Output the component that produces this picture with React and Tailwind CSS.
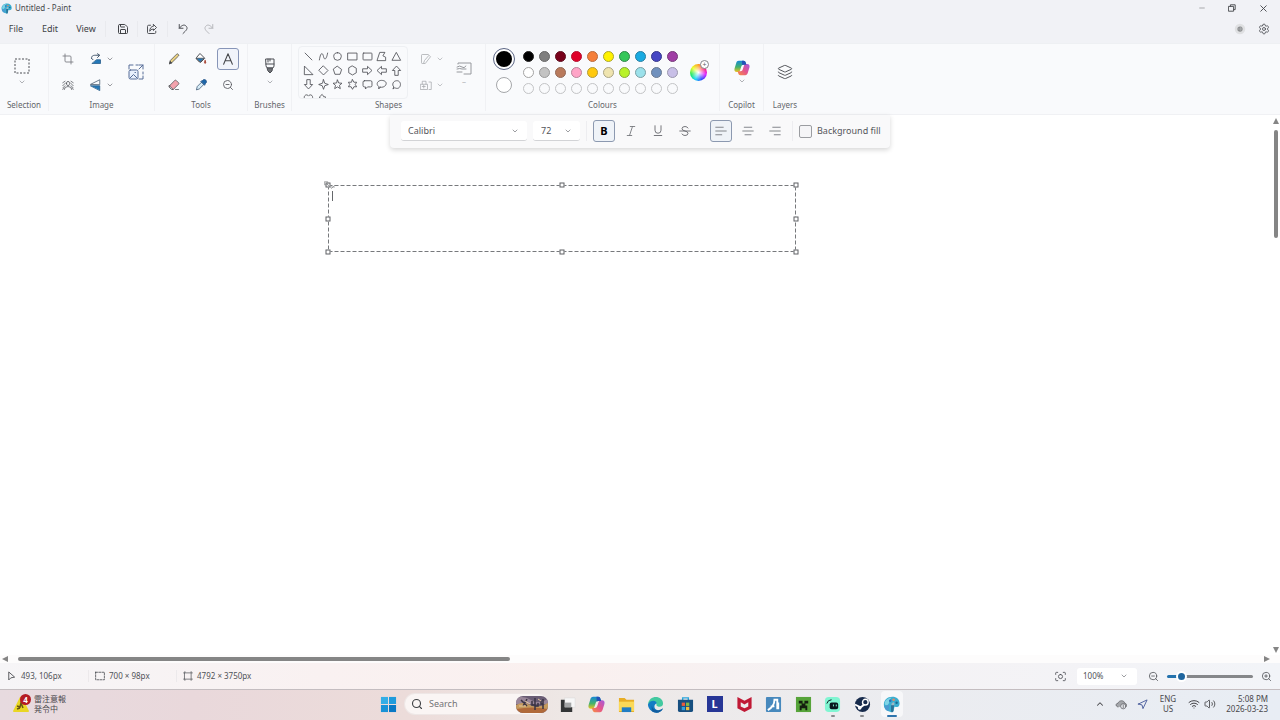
import React from "react";
import { ChevronDown, ChevronUp, Save, Crop, Settings, Minus, X, Search, ZoomOut, ZoomIn, Wifi, Volume2, Navigation, Layers } from "lucide-react";

const Svg = ({ size = "size-[14px]", children, box = "0 0 16 16", stroke = "#4b4d52" }) => (
  <svg viewBox={box} className={`${size} shrink-0`} fill="none" stroke={stroke} strokeWidth="1" strokeLinecap="round" strokeLinejoin="round" aria-hidden="true">
    {children}
  </svg>
);

const Chevron = ({ className = "text-[#6b6d72]" }) => <ChevronDown className={`size-2 shrink-0 ${className}`} strokeWidth={2} aria-hidden="true" />;

const IconButton = ({ label, className = "", children }) => (
  <button type="button" aria-label={label} className={`flex shrink-0 items-center justify-center rounded-[3px] ${className}`}>
    {children}
  </button>
);

const PaintLogo = ({ size }) => (
  <Svg size={size} stroke="none" box="0 0 20 20">
    <path d="M11 1c5 0 8.500 3 8.500 8 0 3-2 4-4 4l-2-.5-1 5q-1 2-3 1.500l-5-2Q1 15 1 10C1 5 5 1 11 1z" fill="#3aaed0" />
    <path d="M2 9c0-4 4-7 8-7-3 2-2 6-4 8-1 1-3 2-4-1z" fill="#7fd4e6" />
    <path d="M1.500 12l6-2-1 8-2-1q-2.500-2-3-5z" fill="#4a9ad0" />
    <circle cx="8.500" cy="5.500" r="1.500" fill="#2f6fb7" />
    <circle cx="12.500" cy="4.500" r="1.500" fill="#e08a66" />
    <circle cx="16" cy="8" r="1.400" fill="#196a91" />
    <path d="M10 9l2-2 1.500 1.500-.5 3h-3z" fill="#9fb9c4" />
    <path d="M9.500 11h3.500l-.8 7q-1.500 2-2.700 0z" fill="#2c7196" />
  </Svg>
);

const CopilotLogo = ({ size }) => (
  <Svg size={size} stroke="none" box="0 0 20 20">
    <defs>
      <linearGradient id="cpA" x1="0" y1="0" x2="0" y2="1">
        <stop offset="0" stopColor="#1789d6" /><stop offset=".55" stopColor="#43b26d" /><stop offset="1" stopColor="#f0c31f" />
      </linearGradient>
      <linearGradient id="cpB" x1="1" y1="0" x2="0" y2="1">
        <stop offset="0" stopColor="#a35be0" /><stop offset=".5" stopColor="#e5548c" /><stop offset="1" stopColor="#f79140" />
      </linearGradient>
    </defs>
    <path d="M6 1h6c1.500 0 2.300 1 2.700 2.500L15.500 6H12c-2 0-2.500 1-3 2.500L7.500 13c-.5 1.500-1.500 2-3 2H3.500C1 15 0 13 .7 10.500L2.700 4C3.300 2 4.200 1 6 1z" fill="url(#cpA)" />
    <path d="M14 19H8c-1.500 0-2.300-1-2.700-2.500L4.500 14H8c2 0 2.500-1 3-2.500L12.500 7c.5-1.500 1.500-2 3-2h1c2.500 0 3.500 2 2.800 4.500L17.300 16c-.6 2-1.500 3-3.300 3z" fill="url(#cpB)" />
    <path d="M10 1h2c1.500 0 2.300 1 2.700 2.500L15.500 6H12c-.8 0-1.400.2-1.800.6z" fill="#2452b8" />
  </Svg>
);

const Group = ({ label, className, children }) => (
  <section aria-label={label} className={`flex shrink-0 flex-col border-r border-[#f0f1f4] pt-0.5 ${className}`}>
    <div className="flex h-[52px]">{children}</div>
    <div className="text-center text-[8px] leading-[13px] text-[#64666b]">{label}</div>
  </section>
);

const shapes = [
  ["Line", "M3 3l10 10"],
  ["Curve", "M2 13C4 0 7 3 8 8s4 6 6-5"],
  ["Oval", "M8 2.500a5.500 5.500 0 100 11 5.500 5.500 0 000-11z"],
  ["Rectangle", "M1.500 3h13v10h-13z"],
  ["Rounded rectangle", "M2.500 3h11q1 0 1 1v8q0 1-1 1h-11q-1 0-1-1V4q0-1 1-1z"],
  ["Polygon", "M6 2h7l-3 5 4 2v5H2z"],
  ["Triangle", "M8 2.500l6 11H2z"],
  ["Right triangle", "M2.500 2l12 12h-12z"],
  ["Diamond", "M8 1.500L14.500 8 8 14.500 1.500 8z"],
  ["Pentagon", "M8 2l6 4.500-2.300 7H4.300L2 6.500z"],
  ["Hexagon", "M8 1.500l5.500 3.200v6.600L8 14.500l-5.500-3.200V4.700z"],
  ["Right arrow", "M1.500 5.500H8V2l6.500 6L8 14v-3.500H1.500z"],
  ["Left arrow", "M14.500 5.500H8V2L1.500 8 8 14v-3.500h6.500z"],
  ["Up arrow", "M5.500 14.500V8H2l6-6.500L14 8h-3.500v6.500z"],
  ["Down arrow", "M5.500 1.500V8H2l6 6.500L14 8h-3.500V1.500z"],
  ["Four-point star", "M8 1l1.800 5.200L15 8 9.800 9.800 8 15 6.200 9.800 1 8l5.200-1.800z"],
  ["Five-point star", "M8 1.500l1.800 4.300 4.700.4-3.600 3 1.200 4.800L8 11.500 3.900 14l1.200-4.800-3.600-3 4.700-.4z"],
  ["Six-point star", "M8 1l2 3.700h4L12 8l2 3.300h-4L8 15l-2-3.700H2L4 8 2 4.700h4z"],
  ["Rounded callout", "M3.500 2.500h9q2 0 2 2v5q0 2-2 2H8l-3 3v-3H3.500q-2 0-2-2v-5q0-2 2-2z"],
  ["Oval callout", "M6 12l-2 2.500V11C-1 7 3 2 8 2s8.500 3 6 7c-1.500 2.500-5 3.500-8 3z"],
  ["Cloud callout", "M3 14l1-2.500C1 8 3 3 8 2.500s7 5 5 8.500-5 3-7 2z"],
  ["Heart", "M8 14L2.500 8C0 5 5 0 8 4.500 11 0 16 5 13.500 8z"],
  ["Lightning", "M2 6l4-4 3 4 1-1 4 9-6-4z"],
];

const swatches = [
  ["Black", "bg-[#000000] border-[#222222]"], ["Grey", "bg-[#7f7f7f] border-[#686868]"], ["Dark red", "bg-[#78001a] border-[#5f1020]"],
  ["Red", "bg-[#df0029] border-[#b51230]"], ["Orange", "bg-[#f57f3b] border-[#ba6a3d]"], ["Yellow", "bg-[#fff200] border-[#aca52c]"],
  ["Green", "bg-[#35c759] border-[#318849]"], ["Turquoise", "bg-[#19abe2] border-[#287fa2]"], ["Indigo", "bg-[#4546c4] border-[#37388b]"], ["Purple", "bg-[#a03da5] border-[#753979]"],
  ["White", "bg-white border-[#a3a3a3]"], ["Light grey", "bg-[#c3c3c3] border-[#999999]"], ["Brown", "bg-[#b97a5c] border-[#936957]"],
  ["Rose", "bg-[#ffa4c7] border-[#b98298]"], ["Gold", "bg-[#ffc90e] border-[#b29a3b]"], ["Light yellow", "bg-[#efe4af] border-[#aaa484]"],
  ["Lime", "bg-[#b8f229] border-[#87a93b]"], ["Light turquoise", "bg-[#9be1eb] border-[#789fa4]"], ["Blue grey", "bg-[#7091be] border-[#687890]"], ["Lavender", "bg-[#c8bfe7] border-[#9a96ad]"],
];

const TitleBar = () => (
  <header className="bg-[#f1f2f6]">
    <div className="flex h-4 items-center justify-between pr-[9px] pl-px">
      <div className="flex items-center gap-[3px] text-[8px] leading-4 text-[#47494d]">
        <PaintLogo size="size-[11px]" />
        <h1>Untitled - Paint</h1>
      </div>
      <div className="flex items-center text-[#45474b]">
        <IconButton label="Minimise" className="h-3 w-[30px]"><Minus className="size-2 text-[#a8a9ac]" strokeWidth={3} /></IconButton>
        <IconButton label="Restore" className="h-3 w-[30px]">
          <Svg size="size-2" box="0 0 10 10"><path d="M1 3h6v6H1zM3 3V1h6v6H7" strokeWidth="1.200" /></Svg>
        </IconButton>
        <IconButton label="Close" className="ml-2 h-3 w-4"><X className="size-[11px]" strokeWidth={2} /></IconButton>
      </div>
    </div>
    <div className="flex h-[27px] items-center justify-between pr-2 pb-0.5 pl-2">
      <nav aria-label="Menu" className="flex items-center text-[9px] text-[#404246]">
        <button type="button" className="w-4 text-center">File</button>
        <button type="button" className="ml-4 w-5 text-center">Edit</button>
        <button type="button" className="ml-4 w-5 text-center">View</button>
        <div className="mx-[9px] h-4 border-l border-[#e9eaee]" />
        <IconButton label="Save" className="size-4"><Save className="size-3" strokeWidth={2} /></IconButton>
        <div className="mx-1.5 h-4 border-l border-[#e9eaee]" />
        <IconButton label="Share" className="size-4">
          <Svg size="size-3"><path d="M6 3H3.500Q2 3 2 4.500v8Q2 14 3.500 14h8q1.500 0 1.500-1.500V11M10 2l4 4-4 4V8Q6 8 5 11q0-6 5-7z" strokeWidth="1.300" /></Svg>
        </IconButton>
        <div className="mx-[7px] h-4 border-l border-[#e9eaee]" />
        <IconButton label="Undo" className="size-4">
          <Svg size="size-3"><path d="M3 2v5h5M3 7C7 2 10 2 12 4s2 4-1 7l-3 3" strokeWidth="1.300" /></Svg>
        </IconButton>
        <IconButton label="Redo" className="ml-2.5 size-4">
          <Svg size="size-3" stroke="#b5b6ba"><path d="M13 2v5H8M13 7C9 2 6 2 4 4s-2 4 1 7l3 3" strokeWidth="1.300" /></Svg>
        </IconButton>
      </nav>
      <div className="flex items-center gap-2">
        <IconButton label="Account" className="size-4">
          <Svg size="size-3" stroke="none"><circle cx="8" cy="8" r="7" fill="#dfe0e2" /><circle cx="8" cy="8" r="3.500" fill="#8d8f91" /><path d="M5 8h6M9 5v5" stroke="#b2b4b5" /></Svg>
        </IconButton>
        <IconButton label="Settings" className="size-4 text-[#505258]"><Settings className="size-3" strokeWidth={1.75} /></IconButton>
      </div>
    </div>
  </header>
);

const Ribbon = () => (
  <div className="flex border-t border-[#eef0f3] border-b border-b-[#f0f1f4] bg-[#f9fafc] pb-[3px]">
    <Group label="Selection" className="w-[49px]">
      <button type="button" aria-label="Select" className="flex w-full flex-col items-center pt-3 pr-1">
        <Svg size="size-4"><rect x="1" y="1" width="14" height="14" strokeDasharray="2 1.500" strokeLinecap="butt" /></Svg>
        <Chevron className="mt-1 text-[#8b8d92]" />
      </button>
    </Group>
    <Group label="Image" className="w-[106px]">
      <div className="grid grid-cols-[28px_40px_28px] grid-rows-2 pl-[5px]">
        <IconButton label="Crop"><Crop className="size-3 text-[#797c82]" strokeWidth={1.75} /></IconButton>
        <IconButton label="Rotate" className="gap-1">
          <Svg size="size-3" stroke="#41546a"><path d="M2 7c0-4 3-4 6-4h4M10 1l3 2-3 3M2 7l2 2" strokeWidth="1.300" /><path d="M3 14h11V9H9z" fill="#2478b8" stroke="#225a88" /></Svg>
          <Chevron />
        </IconButton>
        <IconButton label="Resize" className="row-span-2">
          <Svg size="size-4" stroke="#566d98"><path d="M1 5V1h4M8 1h2M11 1h4v4M15 8v2M15 12v3h-4M11 5l4-4" /><rect x="1" y="6" width="9" height="9" rx="1.500" fill="#e7effc" /><path d="M2 14l3.500-3.500L9 14M7 8.500h.5" /></Svg>
        </IconButton>
        <IconButton label="Remove background">
          <Svg size="size-3" stroke="#55585f"><path d="M1 5l3-2M1 9l4-4M1 12l3-3M12 3l3 2M11 5l4 4M12 9l3 3M6 6q0-3 2-3t2 3-2 3-2-3zM3 14q0-4 5-4t5 4M1 14l2-2M15 14l-2-2" /></Svg>
        </IconButton>
        <IconButton label="Flip" className="gap-1">
          <Svg size="size-3" stroke="#42556b"><path d="M1 7l12-6v6z" fill="#f9fafc" /><path d="M1 9h12v6z" fill="#2478b8" stroke="#225a88" /></Svg>
          <Chevron />
        </IconButton>
      </div>
    </Group>
    <Group label="Tools" className="w-[93px]">
      <div className="mx-auto grid grid-cols-[27px_27px_27px] grid-rows-2 place-items-center">
        <IconButton label="Pencil">
          <Svg size="size-3"><path d="M2 14l1-4 8.500-8.500q1-1 2.200.3t.3 2.200L5.500 12.500z" fill="#ead183" /><path d="M2 14l1-3 2 2z" fill="#444" /></Svg>
        </IconButton>
        <IconButton label="Fill">
          <Svg size="size-3"><path d="M7 1l6 6-5 5q-1 1-2 0L2 8Q1 7 2 6z" fill="#fff" strokeWidth="1.300" /><path d="M2 7h10l-5 5z" fill="#2478b8" /><path d="M13.500 10q-2 3 0 4 2-1 0-4z" fill="#a64030" stroke="#a64030" /></Svg>
        </IconButton>
        <IconButton label="Text" className="size-[22px] border border-[#8795b8] bg-[#f1f4fb]">
          <Svg size="size-[14px]" stroke="#45474c"><path d="M3 14L8 2l5 12M4.800 10h6.400" strokeWidth="1.200" /></Svg>
        </IconButton>
        <IconButton label="Eraser">
          <Svg size="size-3"><path d="M2 9l7-7q1-1 2 0l3 3q1 1 0 2l-7 7H5l-3-3q-1-1 0-2z" fill="#f4a3ad" /><path d="M2 9l5 5H5l-3-3zM10 14h4" fill="#fff" /></Svg>
        </IconButton>
        <IconButton label="Colour picker">
          <Svg size="size-3" stroke="#35516f"><path d="M2 14l1-4 6-6 3 3-6 6z" fill="#d8edf8" /><path d="M8 3l2-1 1-1q2-1 3.500.5T15 5l-1 1-1 2z" fill="#1d66a8" stroke="#1d4c82" /></Svg>
        </IconButton>
        <IconButton label="Magnifier"><ZoomOut className="size-3 text-[#5a5c61]" strokeWidth={1.75} /></IconButton>
      </div>
    </Group>
    <Group label="Brushes" className="w-[44px]">
      <button type="button" aria-label="Brushes" className="flex w-full flex-col items-center pt-3">
        <Svg size="size-4"><path d="M4 1h8v7q0 2-2 2H6Q4 10 4 8zM4 6h8M6 1v3M8 1v2" /><path d="M5.500 10h5L10 13l-2 2-2-2z" fill="#707277" /></Svg>
        <Chevron className="mt-1 text-[#8b8d92]" />
      </button>
    </Group>
    <Group label="Shapes" className="w-[194px]">
      <div className="ml-1.5 mr-1 grid h-[53px] w-[110px] grid-cols-7 content-start overflow-hidden rounded border border-[#eef0f3] pr-[3px] pl-0.5 pt-0.5">
        {shapes.map(([name, d]) => (
          <button key={name} type="button" aria-label={name} className="flex h-[14px] items-center justify-center">
            <Svg size="size-[11px]"><path d={d} strokeWidth="1.200" /></Svg>
          </button>
        ))}
      </div>
      <div className="grid grid-cols-[36px_28px] grid-rows-2 pl-0.5">
        <IconButton label="Shape outline" className="gap-1">
          <Svg size="size-3" stroke="#a6a8ac"><path d="M11 2H3Q2 2 2 3v10q0 1 1 1h4l7-9-2-2-6 7-1 3" /></Svg>
          <Chevron className="text-[#a6a8ac]" />
        </IconButton>
        <button type="button" aria-label="Shape size" className="row-span-2 flex flex-col items-center pt-[14px]">
          <Svg size="size-4" stroke="#96989d"><path d="M2 4V3h13v11H8M1 7q3-2 5 0t4-1M1 9q3-1 5 0h4M1 12h5" /></Svg>
          <span className="text-[8px] leading-3 text-[#b7b9bd]">–</span>
        </button>
        <IconButton label="Shape fill" className="gap-1">
          <Svg size="size-3" stroke="#a6a8ac"><path d="M1 7h9v7H1zM3 7V3h5v4M12 4h3v10h-3M3 10h4M5 8v4" /></Svg>
          <Chevron className="text-[#a6a8ac]" />
        </IconButton>
      </div>
    </Group>
    <Group label="Colours" className="w-[234px]">
      <div className="flex items-center pl-1.5">
        <div className="grid w-6 grid-rows-2 place-items-center self-stretch">
          <IconButton label="Colour 1" className="size-[22px] rounded-full border border-[#5b6584] bg-white"><span className="size-4 rounded-full bg-black" /></IconButton>
          <IconButton label="Colour 2" className="size-4 rounded-full border border-[#a5a7aa] bg-white" />
        </div>
        <div className="ml-1 grid grid-cols-10">
          {swatches.map(([name, color]) => (
            <button key={name} type="button" aria-label={name} className="flex size-4 items-center justify-center">
              <span className={`size-[11px] rounded-full border ${color}`} />
            </button>
          ))}
          {Array.from({ length: 10 }, (_, i) => (
            <button key={i} type="button" aria-label={`Custom colour ${i + 1}`} className="flex size-4 items-center justify-center">
              <span className="size-[11px] rounded-full border border-[#c3c4c6]" />
            </button>
          ))}
        </div>
        <button type="button" aria-label="Edit colours" className="relative ml-2.5 size-[17px] rounded-full bg-[radial-gradient(circle,white,transparent_65%),conic-gradient(#ff9c22,#ff1e5c,#e01cff,#2b44ff,#12d7f5,#22e85d,#eaff24,#ff9c22)]">
          <span className="absolute -top-1 -right-0.5 flex size-[9px] items-center justify-center rounded-full border border-[#85878a] bg-white text-[7px] leading-none text-[#606266]">+</span>
        </button>
      </div>
    </Group>
    <Group label="Copilot" className="w-[44px]">
      <button type="button" aria-label="Copilot" className="flex w-full flex-col items-center pt-[14px]">
        <CopilotLogo size="size-4" />
        <Chevron className="mt-px text-[#8b8d92]" />
      </button>
    </Group>
    <Group label="Layers" className="w-[42px] border-r-0">
      <button type="button" aria-label="Layers" className="flex w-full items-center justify-center"><Layers className="size-4 text-[#55575c]" strokeWidth={1.5} /></button>
    </Group>
  </div>
);

const AlignIcon = ({ d }) => <Svg size="size-3" stroke="#777a80"><path d={d} strokeWidth="1.200" /></Svg>;

const TextToolbar = () => (
  <div role="toolbar" aria-label="Text" className="absolute top-0 left-1/2 flex h-[33px] w-[500px] -translate-x-1/2 items-center rounded-b bg-[#f9f9fa] pr-2 pb-px pl-[11px] text-[9px] text-[#54565b] shadow-[0_2px_5px_rgba(0,0,0,0.16)]">
    <div className="relative flex w-[126px] shrink-0 items-center">
      <select aria-label="Font" className="h-5 w-full appearance-none rounded-[3px] border-b border-[#d2d3d6] bg-white pl-[7px]"><option>Calibri</option></select>
      <span className="pointer-events-none absolute right-2"><Chevron /></span>
    </div>
    <div className="relative ml-1.5 flex w-[47px] shrink-0 items-center">
      <select aria-label="Font size" className="h-5 w-full appearance-none rounded-[3px] border-b border-[#d2d3d6] bg-white pl-2"><option>72</option></select>
      <span className="pointer-events-none absolute right-2"><Chevron /></span>
    </div>
    <div className="mx-1.5 h-5 border-l border-[#ededf0]" />
    <div className="flex gap-[5px]">
      <IconButton label="Bold" className="size-[22px] border border-[#8c99b0] bg-[#eff3f8] text-[11px] font-bold text-black">B</IconButton>
      <IconButton label="Italic" className="size-[22px]"><Svg size="size-3" stroke="#77797e"><path d="M7 2h6M3 14h6M10 2L6 14" strokeWidth="1.200" /></Svg></IconButton>
      <IconButton label="Underline" className="size-[22px]"><Svg size="size-3" stroke="#66686d"><path d="M4 1v6q0 4 4 4t4-4V1M3 14h10" strokeWidth="1.200" /></Svg></IconButton>
      <IconButton label="Strikethrough" className="size-[22px]"><Svg size="size-3" stroke="#66686d"><path d="M12 4Q11 2 8 2 4 2 4 5q0 2 4 3t4 3q0 3-4 3-3 0-4-2M1 8h14" strokeWidth="1.200" /></Svg></IconButton>
    </div>
    <div className="ml-3.5 flex gap-[5px]">
      <IconButton label="Align left" className="size-[22px] border border-[#8c99b0] bg-[#eff3f8]"><AlignIcon d="M1 3h10M1 8h14M1 13h8" /></IconButton>
      <IconButton label="Align centre" className="size-[22px]"><AlignIcon d="M3 3h10M1 8h14M4 13h8" /></IconButton>
      <IconButton label="Align right" className="size-[22px]"><AlignIcon d="M5 3h10M1 8h14M7 13h8" /></IconButton>
    </div>
    <div className="mx-1.5 h-5 border-l border-[#ededf0]" />
    <label className="flex items-center gap-[5px] whitespace-nowrap">
      <input type="checkbox" className="size-[13px] appearance-none rounded-xs border border-[#9b9da1] bg-[#f5f5f7]" />
      Background fill
    </label>
  </div>
);

const handles = [
  "top-0 left-0", "top-0 left-1/2", "top-0 left-full", "top-1/2 left-0", "top-1/2 left-full", "top-full left-0", "top-full left-1/2", "top-full left-full",
];

const Canvas = () => (
  <main className="relative min-w-0 flex-1 bg-white">
    <div className="absolute top-[70px] left-[328px] h-[67px] w-[468px]">
      <svg className="absolute inset-0 size-full" aria-hidden="true">
        <rect x="0.500" y="0.500" width="467" height="66" fill="none" stroke="#77797c" strokeDasharray="4 2" />
      </svg>
      <textarea aria-label="Text box" className="absolute inset-1 resize-none bg-transparent outline-none" />
      <span className="absolute top-1.5 left-1 h-2.5 border-l border-[#66686b]" />
      {handles.map((pos) => (
        <span key={pos} className={`absolute size-[5px] -translate-1/2 border border-[#5f6164] bg-white ${pos}`} />
      ))}
      <Svg size="absolute -top-1 -left-1 size-3" stroke="#898b8e"><path d="M1 1h4v4H1zM4 4l4 4M9 8h5M10 10l4-4" /></Svg>
    </div>
  </main>
);

const Arrow = ({ d }) => (
  <svg viewBox="0 0 6 6" className="size-1.5 shrink-0" fill="#858585" aria-hidden="true"><path d={d} /></svg>
);

const StatusBar = () => (
  <footer className="flex h-[26px] items-center justify-between bg-[linear-gradient(90deg,#f6f5f7,#f9f1f1_25%,#faf0ef_45%,#f5f2f4_65%,#f2f4f8)] pr-2 pl-1.5 text-[8px] text-[#505257]">
    <div className="flex items-center">
      <div className="flex w-[83px] items-center gap-1 border-r border-[#ece9eb]">
        <Svg size="size-[11px]"><path d="M4 2v11l3-3 5-1z" strokeWidth="1.300" /></Svg>493, 106px
      </div>
      <div className="flex w-[88px] items-center gap-1 border-r border-[#ece9eb] pl-1.5">
        <Svg size="size-[10px]"><rect x="1" y="2" width="14" height="12" strokeDasharray="3 2" strokeWidth="1.300" /></Svg>700 × 98px
      </div>
      <div className="flex items-center gap-1 pl-1.5">
        <Svg size="size-[10px]"><path d="M3 3h10v10H3zM3 1v2H1M13 1v2h2M3 15v-2H1M13 15v-2h2" strokeWidth="1.100" /></Svg>4792 × 3750px
      </div>
    </div>
    <div className="flex items-center">
      <IconButton label="Fit to window"><Svg size="size-[11px]"><path d="M1 5V3q0-1 1-1h2M12 2h2q1 0 1 1v2M15 11v2q0 1-1 1h-2M4 14H2q-1 0-1-1v-2M8 5a3 3 0 100 6 3 3 0 000-6z" strokeWidth="1.200" /></Svg></IconButton>
      <div className="relative ml-[11px] flex w-[60px] items-center">
        <select aria-label="Zoom" className="h-[17px] w-full appearance-none rounded-[3px] bg-white pl-1.5"><option>100%</option></select>
        <span className="pointer-events-none absolute right-[9px]"><Chevron /></span>
      </div>
      <IconButton label="Zoom out" className="ml-[11px]"><ZoomOut className="size-[11px]" strokeWidth={1.75} /></IconButton>
      <input
        type="range" aria-label="Zoom level" defaultValue="12"
        className="ml-2 h-2.5 w-[86px] appearance-none rounded-full bg-transparent [&::-webkit-slider-runnable-track]:h-[3px] [&::-webkit-slider-runnable-track]:rounded-full [&::-webkit-slider-runnable-track]:bg-[linear-gradient(90deg,#2472ad_16%,#85878a_16%)] [&::-webkit-slider-thumb]:-mt-[4px] [&::-webkit-slider-thumb]:size-[11px] [&::-webkit-slider-thumb]:appearance-none [&::-webkit-slider-thumb]:rounded-full [&::-webkit-slider-thumb]:border-2 [&::-webkit-slider-thumb]:border-white [&::-webkit-slider-thumb]:bg-[#1f669f]"
      />
      <IconButton label="Zoom in" className="ml-2"><ZoomIn className="size-[11px]" strokeWidth={1.75} /></IconButton>
    </div>
  </footer>
);

const TaskIcon = ({ label, running = "", className = "", children }) => (
  <button type="button" aria-label={label} className={`relative flex h-[26px] w-[22px] items-center justify-center rounded ${className}`}>
    {children}
    {running && <span className={`absolute bottom-0 h-0.5 rounded-full ${running}`} />}
  </button>
);

const Pic = ({ children }) => (
  <svg viewBox="0 0 18 18" className="size-[17px] shrink-0" aria-hidden="true">{children}</svg>
);

const Taskbar = () => (
  <footer className="grid h-[31px] grid-cols-[1fr_auto_1fr] items-center border-t border-[#c4bdc0] bg-[linear-gradient(90deg,#e7dadf,#e9d8db_15%,#ecdcda_32%,#eee8e6_45%,#ececef_65%,#e8edf4)] pb-0.5 text-[8px] leading-[10px] text-[#48484c]">
    <button type="button" className="flex items-center gap-0.5 pl-3 text-left">
      <svg viewBox="0 0 20 20" className="size-5" aria-hidden="true">
        <path d="M8 3q1-1 2 0l7 14q0 1-1 1H2q-1 0-1-1z" fill="#e9d624" /><path d="M5 12l3 1 1-4 2 5M5 15l3-1" stroke="#665414" strokeWidth="1.500" fill="none" />
        <circle cx="13.500" cy="5.500" r="5.500" fill="#b51b24" />
        <text x="13.500" y="8.500" textAnchor="middle" fontSize="8" fontWeight="700" fill="#fff">4</text>
      </svg>
      <span lang="ja">雷注意報<br />発令中</span>
    </button>
    <div className="flex items-center">
      <TaskIcon label="Start">
        <Pic><path d="M1 1h7.500v7.500H1z" fill="#34aee6" /><path d="M9.500 1H17v7.500H9.500z" fill="#209bdc" /><path d="M1 9.500h7.500V17H1z" fill="#1993d7" /><path d="M9.500 9.500H17V17H9.500z" fill="#0878c5" /></Pic>
      </TaskIcon>
      <label className="ml-1.5 flex h-5 w-[143px] items-center rounded-full bg-[#faf5f4] pl-1.5 shadow-[0_0_0_1px_#eee7e6]">
        <Search className="size-3 shrink-0 text-[#3e4043]" strokeWidth={2.25} />
        <input type="search" placeholder="Search" aria-label="Search" className="ml-1.5 min-w-0 flex-1 bg-transparent text-[9px] outline-none placeholder:text-[#737376]" />
        <svg viewBox="0 0 32 17" className="h-[17px] w-8 shrink-0" aria-hidden="true">
          <defs><clipPath id="pill"><rect width="32" height="17" rx="7" /></clipPath></defs>
          <g clipPath="url(#pill)">
            <path d="M0 0h32v17H0z" fill="#6a5c74" /><path d="M0 2q8-3 15 2t17-1v5H0z" fill="#9a8699" /><path d="M0 9q7-4 14 0t18-2v6H0z" fill="#c59a5d" />
            <path d="M0 13q16-3 32 0v4H0z" fill="#b0693a" /><path d="M19 2v12M16 5v4h3M22 7v3h-3M27 3v10M25 5v3h2M5 4l6 6M11 3l-4 7" stroke="#3a3343" strokeWidth="1.500" fill="none" /><path d="M9 5l5 3M22 3l3 2M3 10h7" stroke="#e6c79b" strokeWidth="1" />
          </g>
        </svg>
      </label>
      <div className="ml-2 flex w-[347px] justify-between">
        <TaskIcon label="Task view"><Pic><path d="M6 2h11v10H6z" fill="#f7f7f7" stroke="#d6d6d6" strokeWidth=".5" /><path d="M2 4h4v8h8v5H2z" fill="#333536" /><path d="M6 7h7v5H6z" fill="#a4a6a7" /></Pic></TaskIcon>
        <TaskIcon label="Copilot"><CopilotLogo size="size-[17px]" /></TaskIcon>
        <TaskIcon label="File Explorer"><Pic><path d="M1 2h6l2 2h8v13H1z" fill="#e8ad25" /><path d="M1 6h16v10H1z" fill="#fbd957" /><path d="M4 12h10v5H4z" fill="#227dc3" /></Pic></TaskIcon>
        <TaskIcon label="Edge">
          <Pic><path d="M1 9C2-2 17-1 17 8c0 4-5 4-7 2 1-4-5-6-9-1z" fill="#43c9a0" /><path d="M1 9c3-6 10-4 9-1-3 1-3 6 1 7 2 1 4 0 6-2-2 5-8 6-12 3Q1 13 1 9z" fill="#147cc4" /><path d="M5 10c1 5 6 7 12 3-2 5-8 6-12 3z" fill="#125d9f" /></Pic>
        </TaskIcon>
        <TaskIcon label="Store"><Pic><path d="M6 5V2h6v3" stroke="#2aa5dc" strokeWidth="1.500" fill="none" /><path d="M1 4h16v11q0 2-2 2H3q-2 0-2-2z" fill="#174f80" /><path d="M5 7h3.500v3.500H5z" fill="#e85a3d" /><path d="M9.500 7H13v3.500H9.500z" fill="#80b84a" /><path d="M5 11.500h3.500V15H5z" fill="#32a0dc" /><path d="M9.500 11.500H13V15H9.500z" fill="#edbd3c" /></Pic></TaskIcon>
        <TaskIcon label="L"><span className="flex size-4 items-center justify-center bg-[#273696] text-[11px] font-bold text-white">L</span></TaskIcon>
        <TaskIcon label="McAfee"><Pic><path d="M1.500 1L9 5l7.500-4v12L9 17l-7.500-4zM5 6.500v4.500l4 2 4-2V6.500L9 9z" fill="#c01935" fillRule="evenodd" /></Pic></TaskIcon>
        <TaskIcon label="Assistant"><Pic><rect x="1" y="1" width="16" height="16" rx="1" fill="#4789bd" /><path d="M3 15q7-4 7-11h3v10M6 11h4M14 7v7" stroke="#fff" strokeWidth="2" fill="none" /></Pic></TaskIcon>
        <TaskIcon label="Minecraft"><Pic><path d="M1 1h16v16H1z" fill="#56a43a" /><path d="M4 5h4v3H4zM10 5h4v3h-4zM7 8h4v2h2v5h-2v-2H7v2H5v-5h2z" fill="#14200f" /></Pic></TaskIcon>
        <TaskIcon label="Streamlabs" running="w-1 bg-[#8a8b8e]"><Pic><rect x="1" y="1" width="16" height="16" rx="4" fill="#80f5d2" /><rect x="6" y="7" width="9" height="7" rx="2" fill="#09161e" /><path d="M3 8q1-4 5-4" stroke="#09161e" fill="none" /><path d="M10 9v2M13 9v2" stroke="#80f5d2" /></Pic></TaskIcon>
        <TaskIcon label="Steam" running="w-1 bg-[#8a8b8e]"><Pic><circle cx="9" cy="9" r="8" fill="#172b4c" /><path d="M1 9l6 3 4-3" stroke="#fff" strokeWidth="2" fill="none" /><circle cx="12" cy="6.500" r="3" fill="#172b4c" stroke="#fff" strokeWidth="1.500" /><circle cx="6" cy="12.500" r="2" fill="#fff" /></Pic></TaskIcon>
        <TaskIcon label="Paint" running="w-2.5 bg-[#2f75ad]" className="bg-white/60"><PaintLogo size="size-[17px]" /></TaskIcon>
      </div>
    </div>
    <div className="flex items-center justify-end pr-3">
      <IconButton label="Show hidden icons"><ChevronUp className="size-[10px]" strokeWidth={2.5} /></IconButton>
      <IconButton label="Cloud sync" className="ml-2.5">
        <Svg size="size-3" stroke="#606267"><path d="M4 12C0 11 1 7 4 7c1-4 8-5 9 0 2 0 3 2 2 4" fill="#a4a6aa" /><circle cx="11" cy="11" r="3.500" fill="#e7e9ed" /><path d="M11 9v4" /></Svg>
      </IconButton>
      <IconButton label="Location" className="ml-2.5"><Navigation className="size-[11px] text-[#465a9a]" strokeWidth={2} /></IconButton>
      <button type="button" className="ml-2.5 w-5 text-center">ENG<br />US</button>
      <IconButton label="Network" className="ml-2.5"><Wifi className="size-3" strokeWidth={2} /></IconButton>
      <IconButton label="Volume" className="ml-1"><Volume2 className="size-3" strokeWidth={1.75} /></IconButton>
      <button type="button" className="ml-2 w-[44px] text-right whitespace-nowrap"><span className="block">5:08 PM</span><span className="block">2026-03-23</span></button>
    </div>
  </footer>
);

export default function App() {
  return (
    <div className="flex h-screen flex-col overflow-hidden bg-white font-['Noto_Sans','Noto_Sans_CJK_JP',sans-serif]">
      <TitleBar />
      <Ribbon />
      <div className="relative flex min-h-0 flex-1">
        <Canvas />
        <TextToolbar />
        <div className="flex w-2 flex-col items-center bg-white pt-[3px] pb-0.5">
          <Arrow d="M3 0l3 6H0z" />
          <div className="mt-1.5 h-[108px] w-1 rounded-full bg-[#858585]" />
          <div className="flex-1" />
          <Arrow d="M3 6l3-6H0z" />
        </div>
      </div>
      <div className="flex h-2 items-center bg-[#fdfcfc] pr-2.5 pl-0.5">
        <Arrow d="M0 3l6-3v6z" />
        <div className="ml-2.5 h-1 w-[492px] rounded-full bg-[#858585]" />
        <div className="flex-1" />
        <Arrow d="M6 3L0 0v6z" />
      </div>
      <StatusBar />
      <Taskbar />
    </div>
  );
}
